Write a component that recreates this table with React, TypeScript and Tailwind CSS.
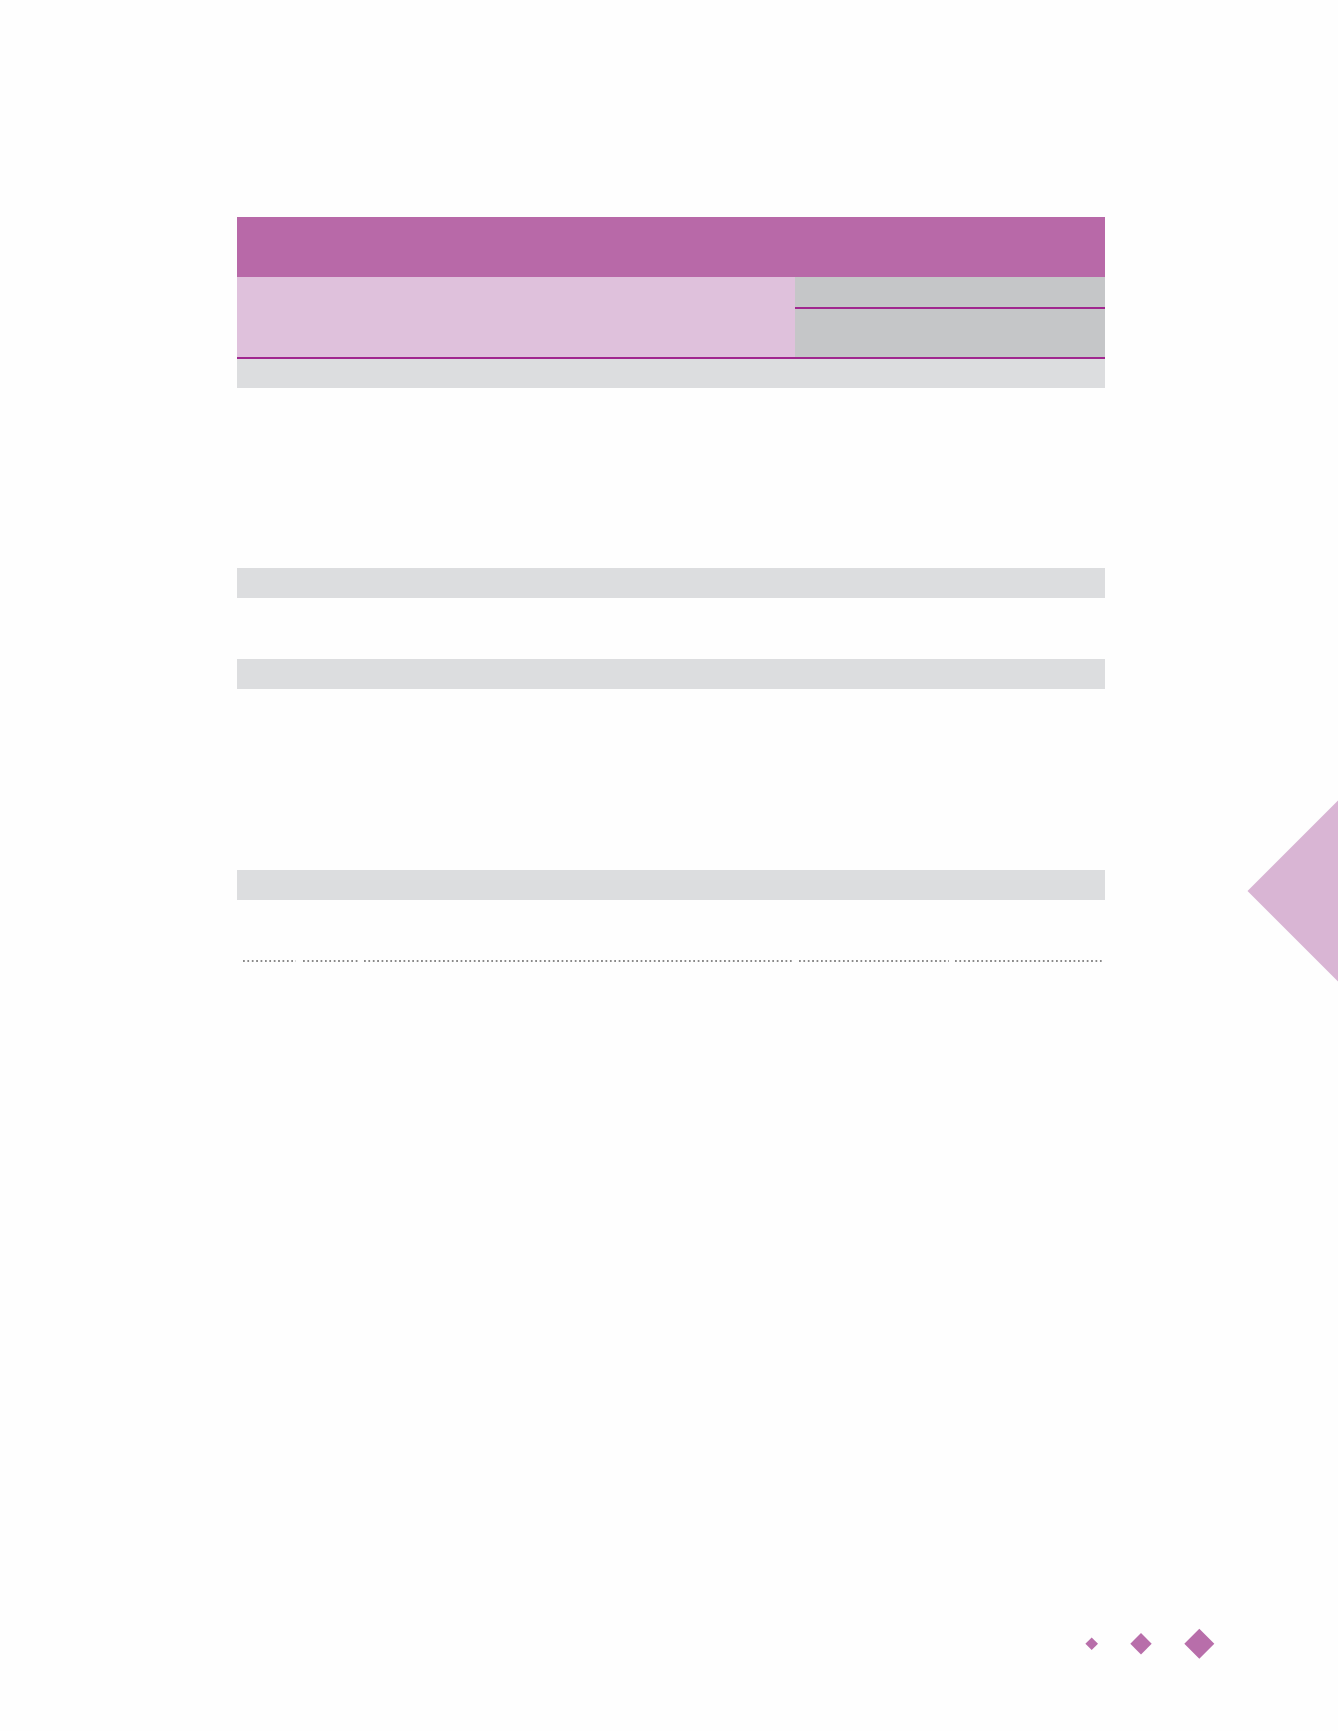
const dots = 'h-[2px] bg-[linear-gradient(to_right,#8a8a8a_0,#8a8a8a_1.6px,transparent_1.6px)] bg-[length:4.4px_2px] bg-repeat-x';

export default function App() {
  return (
    <div className="relative w-[1338px] h-[1731px] overflow-hidden bg-[#fefefe]" style={{ fontFamily: '"Liberation Sans", Arial, sans-serif' }}>
      <div className="ml-[237px] w-[868px] pt-[217px] flex flex-col">
        {/* header */}
        <div className="h-[60px] bg-[#b869a8]" />
        <div className="flex h-[80px]">
          <div className="w-[558px] bg-[#dfc1dc]" />
          <div className="flex-1 flex flex-col bg-[#c5c6c8]">
            <div className="h-[30px]" />
            <div className="h-[2px] bg-[#a0278f]" />
            <div className="flex-1" />
          </div>
        </div>
        <div className="h-[2px] bg-[#a0278f]" />
        <div className="h-[29px] bg-[#dcdddf]" />
        <div className="h-[180px]" />
        <div className="h-[30px] bg-[#dcdddf]" />
        <div className="h-[61px]" />
        <div className="h-[30px] bg-[#dcdddf]" />
        <div className="h-[181px]" />
        <div className="h-[30px] bg-[#dcdddf]" />
        <div className="h-[60px]" />
        <div className="flex ml-[6px]">
          <div className={`w-[53px] ${dots}`} />
          <div className={`w-[55px] ml-[7px] ${dots}`} />
          <div className={`w-[429px] ml-[6px] ${dots}`} />
          <div className={`w-[150px] ml-[6px] ${dots}`} />
          <div className={`w-[147px] ml-[6px] ${dots}`} />
        </div>
      </div>

      {/* side tab */}
      <svg className="absolute left-[1247px] top-[800px]" width="91" height="182" viewBox="0 0 91 182">
        <polygon points="0.5,91 91,0.5 91,181.5" fill="#d9b5d4" />
      </svg>

      {/* page diamonds */}
      <svg className="absolute left-[1080px] top-[1624px]" width="140" height="40" viewBox="0 0 140 40">
        <polygon points="11.7,13.5 18,19.7 11.7,26 5.4,19.7" fill="#b86eaa" />
        <polygon points="61,9 71.7,19.7 61,30.4 50.3,19.7" fill="#b86eaa" />
        <polygon points="119.3,4.7 134.3,19.7 119.3,34.7 104.3,19.7" fill="#b86eaa" />
      </svg>
    </div>
  );
}
